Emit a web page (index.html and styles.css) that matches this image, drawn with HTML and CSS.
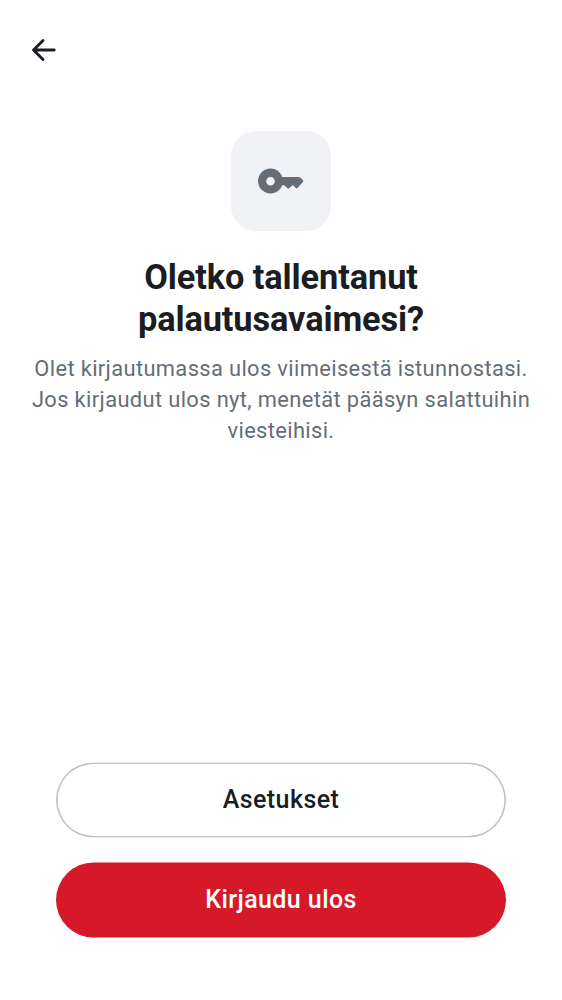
FILE: index.html
```html
<!DOCTYPE html>
<html lang="fi">
<head>
<meta charset="utf-8">
<title>Oletko tallentanut palautusavaimesi?</title>
<link rel="stylesheet" href="styles.css">
</head>
<body>
<main class="screen">
  <header class="topbar">
    <button class="back" aria-label="Takaisin">
      <svg class="back-icon" viewBox="0 0 25 25"><path d="M23.200 13H3M12 3.500 2.500 13 12 22.500"/></svg>
    </button>
  </header>
  <section class="intro">
    <div class="tile">
      <svg class="key" viewBox="0 0 46 26"><path fill-rule="evenodd" d="M12.500.5C17.800.5 22.400 3.800 24.200 8.900H40.800Q41.700 8.900 42.300 9.500L44.900 12.100Q45.700 13 44.900 13.900L39.700 19.700Q38.700 20.800 37.600 19.700L34.900 17 31.400 19.900Q30.300 20.900 29.200 19.900L26.300 17.300H24.200C22.400 22.300 17.800 25.500 12.500 25.500A12.500 12.500 0 0 1 12.500.5ZM12.500 8.900a4.300 4.300 0 1 0 0 8.600 4.300 4.300 0 0 0 0-8.600Z"/></svg>
    </div>
    <h1 class="title">Oletko tallentanut<br>palautusavaimesi?</h1>
    <p class="text">Olet kirjautumassa ulos viimeisestä istunnostasi.<br>Jos kirjaudut ulos nyt, menetät pääsyn salattuihin<br>viesteihisi.</p>
  </section>
  <footer class="actions">
    <button class="btn btn-outline">Asetukset</button>
    <button class="btn btn-danger">Kirjaudu ulos</button>
  </footer>
</main>
</body>
</html>
```
FILE: styles.css
```css
* { box-sizing: border-box; }
body { margin: 0; background: #fff; font-family: Roboto, sans-serif; color: #1b1d22; }
.screen { height: 1000px; display: flex; flex-direction: column; }
.topbar { height: 99px; padding: 0 31px; display: flex; align-items: center; }
.back { border: 0; background: none; padding: 0; display: flex; color: inherit; }
.back-icon { width: 25px; height: 25px; fill: none; stroke: currentColor; stroke-width: 2.900; stroke-linejoin: round; stroke-linecap: round; }
.intro { flex: 1; padding-top: 32px; display: flex; flex-direction: column; align-items: center; text-align: center; }
.tile { width: 100px; height: 100px; border-radius: 25px; background: #f0f2f5; display: flex; align-items: center; justify-content: center; }
.key { width: 46px; height: 26px; fill: #656d77; }
.title { margin: 25px 0 0; font-size: 34.375px; line-height: 42px; letter-spacing: -0.100px; font-weight: 700; white-space: nowrap; }
.text { margin: 13px 0 0; font-size: 21.875px; line-height: 31px; letter-spacing: 0.370px; color: #656d77; white-space: nowrap; }
.actions { padding: 0 56px 62px; display: flex; flex-direction: column; gap: 25px; transform: translateY(-0.500px); }
.btn { height: 75px; padding: 0 0 1px; border-radius: 37.500px; border: 0; font: 500 25px/30px Roboto, sans-serif; letter-spacing: 0.420px; }
.btn-outline { background: #fff; box-shadow: inset 0 0 0 1.560px #bbc1cc; color: #1b1d22; }
.btn-danger { background: #d51928; color: #fff; }
```
